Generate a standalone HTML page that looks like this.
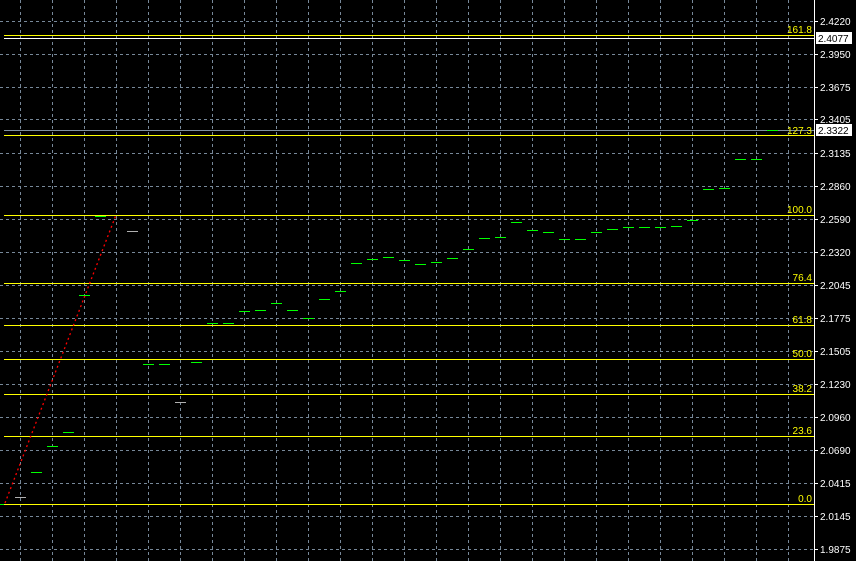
<!DOCTYPE html>
<html><head><meta charset="utf-8"><style>
html,body{margin:0;padding:0;background:#000;width:856px;height:561px;overflow:hidden}
svg{display:block}
text{font-family:"Liberation Sans",sans-serif;font-size:10px}
</style></head><body>
<svg width="856" height="561" xmlns="http://www.w3.org/2000/svg">
<rect width="856" height="561" fill="#000"/>
<g stroke="#778899" stroke-width="1" stroke-dasharray="3,3" shape-rendering="crispEdges">
<path d="M20.5 0V561M52.5 0V561M84.5 0V561M116.5 0V561M148.5 0V561M180.5 0V561M212.5 0V561M244.5 0V561M276.5 0V561M308.5 0V561M340.5 0V561M372.5 0V561M404.5 0V561M436.5 0V561M468.5 0V561M500.5 0V561M532.5 0V561M564.5 0V561M596.5 0V561M628.5 0V561M660.5 0V561M692.5 0V561M724.5 0V561M756.5 0V561M788.5 0V561"/>
<path d="M0 21.5H814M0 54.5H814M0 87.5H814M0 119.5H814M0 153.5H814M0 186.5H814M0 219.5H814M0 252.5H814M0 285.5H814M0 318.5H814M0 351.5H814M0 384.5H814M0 417.5H814M0 450.5H814M0 483.5H814M0 516.5H814M0 549.5H814"/>
</g>
<g stroke="#ffff00" stroke-width="1.3" shape-rendering="crispEdges">
<path d="M4 35.5H814M4 135.5H814M4 215.5H814M4 283.5H814M4 325.5H814M4 359.5H814M4 394.5H814M4 436.5H814M4 504.5H814"/>
</g>
<g stroke="#fff" stroke-width="1" shape-rendering="crispEdges">
<path d="M4 38.5H814"/>
</g>
<path d="M4 130.5H814" stroke="#8090a0" stroke-width="1" shape-rendering="crispEdges"/>
<path d="M5 503L116 215" stroke="#ff0000" stroke-width="1.3" stroke-dasharray="2,3"/>
<g stroke="#00ff00" stroke-width="1.3" shape-rendering="crispEdges">
<path d="M31 472.5h11M47 446.5h11M63 432.5h11M79 295.5h11M95 216.5h11M143 364.5h11M159 364.5h11M191 362.5h11M207 323.5h11M223 323.5h11M239 311.5h11M255 310.5h11M271 303.5h11M287 310.5h11M303 318.5h11M319 299.5h11M335 291.5h11M351 263.5h11M367 259.5h11M383 257.5h11M399 260.5h11M415 264.5h11M431 262.5h11M447 258.5h11M463 249.5h11M479 238.5h11M495 237.5h11M511 222.5h11M527 230.5h11M543 232.5h11M559 239.5h11M575 239.5h11M591 232.5h11M607 229.5h11M623 227.5h11M639 227.5h11M655 227.5h11M671 226.5h11M687 220.5h11M703 189.5h11M719 188.5h11M735 159.5h11M751 159.5h11M767 130.5h11M0 504.5h4"/>
</g>
<g stroke="#b0b0b0" stroke-width="1.3" shape-rendering="crispEdges">
<path d="M15 497.5h11M127 231.5h11M175 402.5h11"/>
</g>
<g fill="#ffff00" text-anchor="end">
<text x="812" y="33">161.8</text>
<text x="812" y="134">127.3</text>
<text x="812" y="213">100.0</text>
<text x="812" y="281">76.4</text>
<text x="812" y="323">61.8</text>
<text x="812" y="357">50.0</text>
<text x="812" y="392">38.2</text>
<text x="812" y="434">23.6</text>
<text x="812" y="502">0.0</text>
</g>
<path d="M814.5 0V561" stroke="#fff" stroke-width="1" shape-rendering="crispEdges"/>
<g stroke="#fff" shape-rendering="crispEdges">
<path d="M814 21.5h4M814 54.5h4M814 87.5h4M814 119.5h4M814 153.5h4M814 186.5h4M814 219.5h4M814 252.5h4M814 285.5h4M814 318.5h4M814 351.5h4M814 384.5h4M814 417.5h4M814 450.5h4M814 483.5h4M814 516.5h4M814 549.5h4"/>
</g>
<g fill="#fff">
<text x="820" y="25">2.4220</text>
<text x="820" y="58">2.3950</text>
<text x="820" y="91">2.3675</text>
<text x="820" y="123">2.3405</text>
<text x="820" y="157">2.3135</text>
<text x="820" y="190">2.2860</text>
<text x="820" y="223">2.2590</text>
<text x="820" y="256">2.2320</text>
<text x="820" y="289">2.2045</text>
<text x="820" y="322">2.1775</text>
<text x="820" y="355">2.1505</text>
<text x="820" y="388">2.1230</text>
<text x="820" y="421">2.0960</text>
<text x="820" y="454">2.0690</text>
<text x="820" y="487">2.0415</text>
<text x="820" y="520">2.0145</text>
<text x="820" y="553">1.9875</text>
</g>
<rect x="816" y="32" width="36" height="12" fill="#fff"/>
<rect x="816" y="124" width="36" height="12" fill="#fff"/>
<g fill="#000">
<text x="818" y="42">2.4077</text>
<text x="818" y="134">2.3322</text>
</g>
</svg>
</body></html>
